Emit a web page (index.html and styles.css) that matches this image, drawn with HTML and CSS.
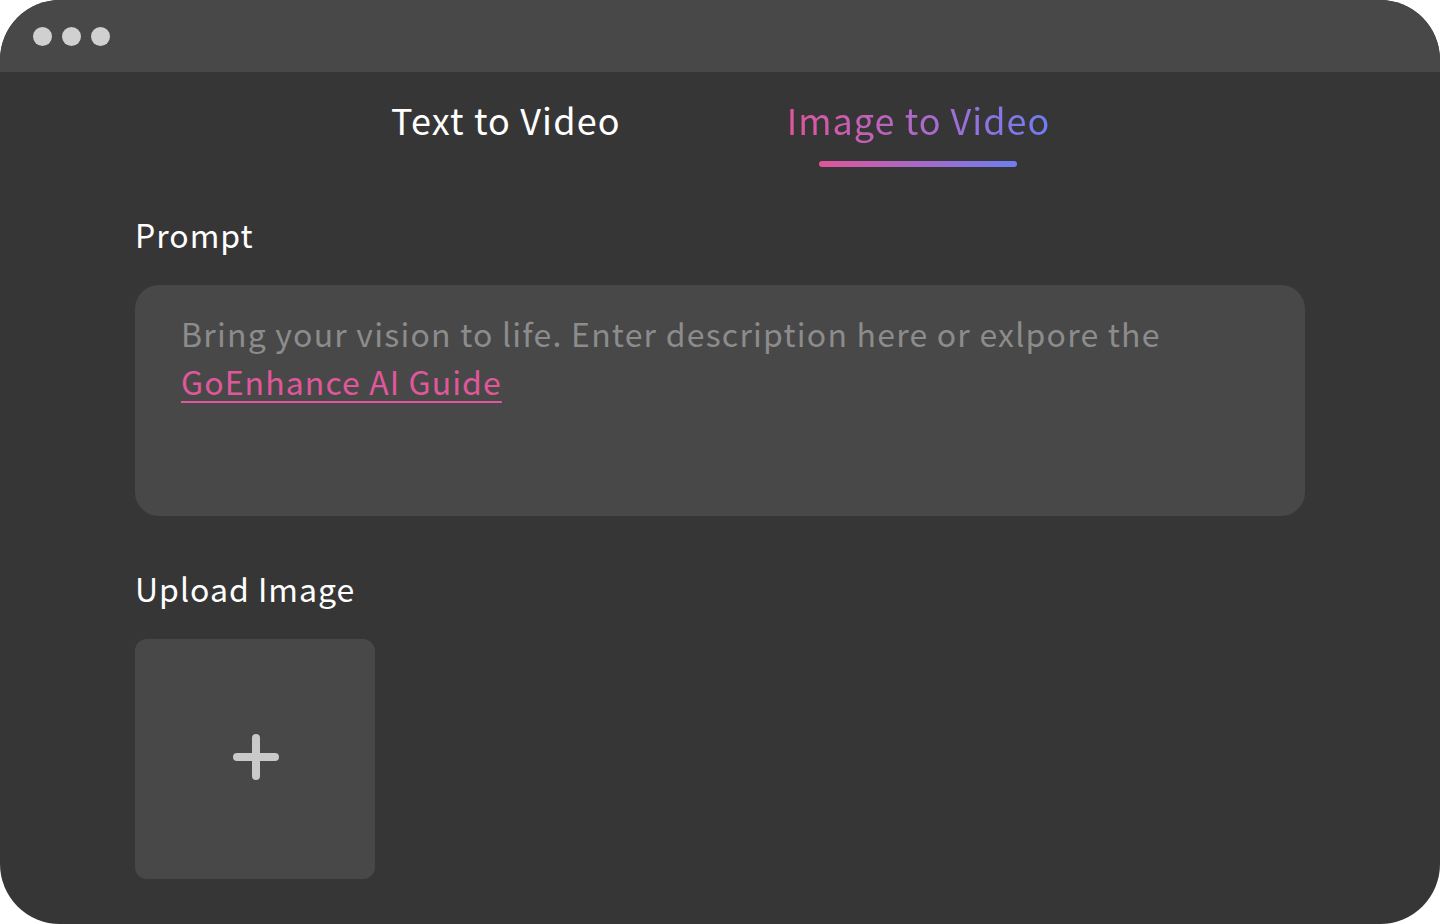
FILE: index.html
```html
<!DOCTYPE html>
<html>
<head>
<meta charset="utf-8">
<link rel="stylesheet" href="styles.css">
</head>
<body>
<div class="window">
  <div class="titlebar">
    <span class="dot"></span><span class="dot"></span><span class="dot"></span>
  </div>
  <div class="main">
    <div class="tabs">
      <div class="tab">Text to Video</div>
      <div class="tab active"><span class="grad">Image to Video</span><span class="bar"></span></div>
    </div>
    <div class="section">
      <div class="label">Prompt</div>
      <div class="prompt">Bring your vision to life. Enter description here or exlpore the <a class="link">GoEnhance AI Guide</a></div>
      <div class="label label2">Upload Image</div>
      <div class="upload">
        <svg width="48" height="48" viewBox="0 0 48 48"><path d="M24 5V43M5 24H43" stroke="#c9c9c9" stroke-width="8" stroke-linecap="round" fill="none"/></svg>
      </div>
    </div>
  </div>
</div>
</body>
</html>
```
FILE: styles.css
```css
html, body { margin: 0; padding: 0; background: #ffffff; }
body { font-family: "Noto Sans CJK SC", "Noto Sans", sans-serif; }
.window {
  width: 1440px; height: 924px; border-radius: 60px; overflow: hidden;
  background: #363636; display: flex; flex-direction: column;
}
.titlebar {
  height: 72px; background: #484848; display: flex; align-items: center;
  padding-left: 33px; gap: 10px; box-sizing: border-box; flex: none;
}
.dot { width: 19px; height: 19px; border-radius: 50%; background: #d0d0d0; }
.main { flex: 1; }
.tabs { display: flex; padding-left: 391px; gap: 166px; padding-top: 23px; }
.tab { font-size: 36px; line-height: 48px; color: #ffffff; position: relative; letter-spacing: 1.15px; }
.tab.active { display: flex; flex-direction: column; align-items: center; letter-spacing: 1px; }
.grad {
  background: linear-gradient(90deg, #e0559a 0%, #a96bd0 55%, #6e7ef2 100%);
  -webkit-background-clip: text; background-clip: text; color: transparent;
}
.bar {
  width: 198px; height: 6px; border-radius: 3px; margin-top: 18px;
  background: linear-gradient(90deg, #e0559a, #6e7ef2);
}
.section { padding: 45px 135px 0 135px; }
.label { font-size: 32px; line-height: 44px; color: #ffffff; letter-spacing: 1px; }
.prompt {
  margin-top: 29px; height: 231px; box-sizing: border-box; background: #484848;
  border-radius: 24px; padding: 24px 46px; font-size: 32px; line-height: 48px;
  color: #8c8c8c; letter-spacing: 1.22px;
}
.link { color: #e0579b; text-decoration: underline; text-underline-offset: 6px; text-decoration-thickness: 2px; letter-spacing: 1.1px; }
.label2 { margin-top: 50px; }
.upload {
  margin-top: 29px; width: 240px; height: 240px; background: #484848; border-radius: 12px;
  display: flex; align-items: center; justify-content: center;
}
.upload svg { margin-left: 2px; margin-top: -4px; }
```
